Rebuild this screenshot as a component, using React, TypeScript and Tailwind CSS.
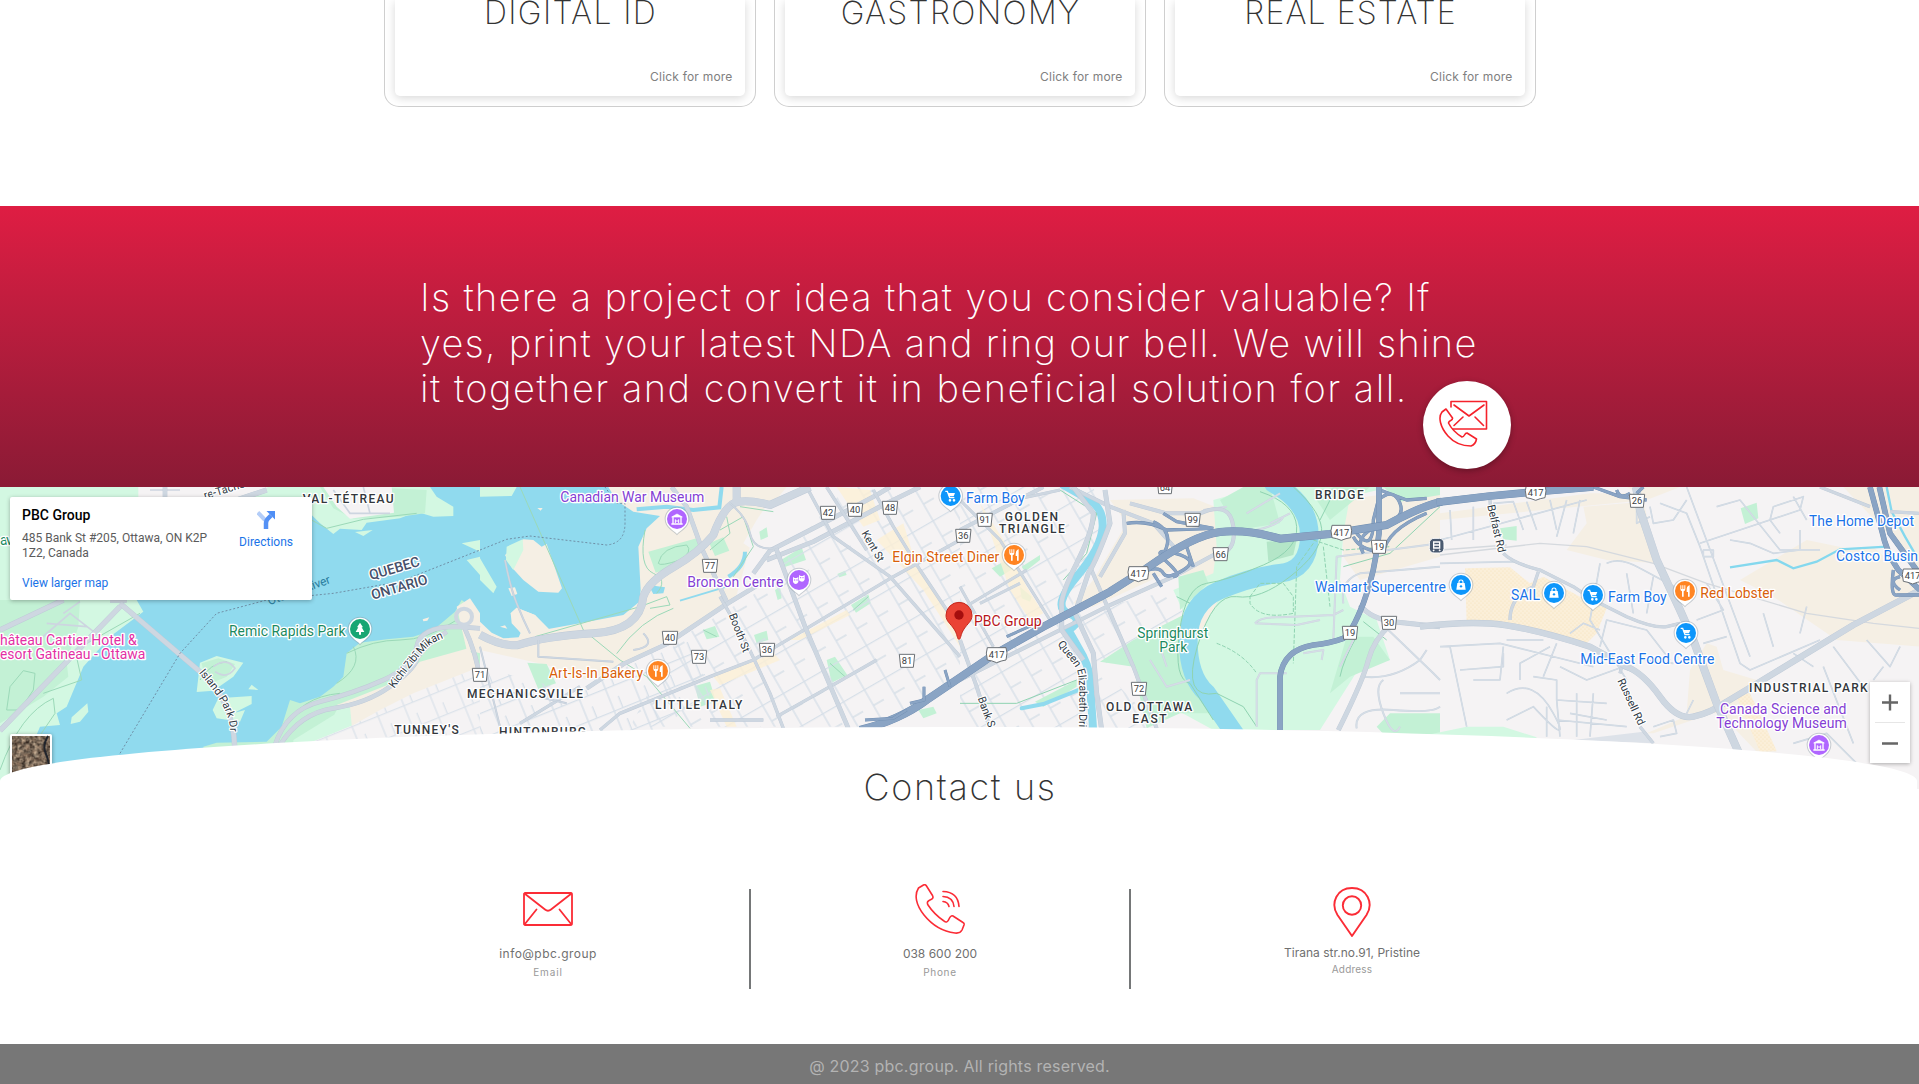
import React, { type ReactNode } from "react";

const LABEL = "Roboto, 'Liberation Sans', sans-serif";

/* ---------- map data (drawn at three units per pixel) ---------- */

type Place = { t: string; x: number; y: number; w: number; c: string };

const BLUE = "#1a73e8";
const ORANGE = "#d9600a";
const PURPLE = "#8440d4";
const GREEN = "#1c8a5f";
const MAGENTA = "#e32fa4";

const places: Place[] = [
  { t: "hâteau Cartier Hotel &", x: 0, y: 495, w: 410, c: MAGENTA },
  { t: "esort Gatineau - Ottawa", x: 0, y: 538, w: 436, c: MAGENTA },
  { t: "Remic Rapids Park", x: 687, y: 469, w: 350, c: GREEN },
  { t: "av", x: 0, y: 195, w: 38, c: GREEN },
  { t: "Canadian War Museum", x: 1681, y: 66, w: 432, c: PURPLE },
  { t: "Bronson Centre", x: 2062, y: 321, w: 288, c: PURPLE },
  { t: "Elgin Street Diner", x: 2677, y: 247, w: 321, c: ORANGE },
  { t: "Art-Is-In Bakery", x: 1647, y: 594, w: 282, c: ORANGE },
  { t: "Farm Boy", x: 2898, y: 69, w: 176, c: BLUE },
  { t: "PBC Group", x: 2922, y: 438, w: 203, c: "#b8151b" },
  { t: "Springhurst", x: 3412, y: 475, w: 213, c: GREEN },
  { t: "Park", x: 3478, y: 516, w: 84, c: GREEN },
  { t: "Walmart Supercentre", x: 3945, y: 337, w: 393, c: BLUE },
  { t: "SAIL", x: 4533, y: 360, w: 87, c: BLUE },
  { t: "Farm Boy", x: 4824, y: 367, w: 176, c: BLUE },
  { t: "Red Lobster", x: 5101, y: 354, w: 222, c: ORANGE },
  { t: "The Home Depot", x: 5427, y: 139, w: 315, c: BLUE },
  { t: "Costco Busin", x: 5508, y: 243, w: 246, c: BLUE },
  { t: "Mid-East Food Centre", x: 4741, y: 553, w: 402, c: BLUE },
  { t: "Canada Science and", x: 5160, y: 703, w: 379, c: PURPLE },
  { t: "Technology Museum", x: 5149, y: 745, w: 391, c: PURPLE },
];

const districts: Omit<Place, "c">[] = [
  { t: "VAL-TÉTREAU", x: 908, y: 70, w: 273 },
  { t: "TUNNEY'S", x: 1183, y: 763, w: 193 },
  { t: "MECHANICSVILLE", x: 1401, y: 655, w: 348 },
  { t: "LITTLE ITALY", x: 1965, y: 688, w: 262 },
  { t: "HINTONBURG", x: 1497, y: 768, w: 261 },
  { t: "GOLDEN", x: 3014, y: 124, w: 160 },
  { t: "TRIANGLE", x: 2997, y: 160, w: 197 },
  { t: "OLD OTTAWA", x: 3318, y: 694, w: 259 },
  { t: "EAST", x: 3397, y: 730, w: 103 },
  { t: "BRIDGE", x: 3945, y: 57, w: 146 },
  { t: "INDUSTRIAL PARK", x: 5247, y: 637, w: 356 },
];

const shields = [
  ["71", 1440, 585], ["77", 2130, 258], ["42", 2484, 99], ["40", 2565, 90], ["48", 2670, 84],
  ["40", 2010, 474], ["73", 2097, 531], ["36", 2301, 510], ["81", 2721, 543], ["36", 2890, 168],
  ["91", 2954, 120], ["64", 3495, 22], ["99", 3578, 120], ["66", 3662, 223], ["72", 3417, 627],
  ["19", 4137, 201], ["19", 4050, 459], ["30", 4167, 429], ["26", 4911, 63],
] as const;

const highwayShields = [
  [2990, 525], [3415, 282], [4024, 158], [4607, 38], [5738, 289],
];

const turnedLabels = [
  { t: "Kent St", x: 2584, y: 160, r: 60, w: 102 },
  { t: "Booth St", x: 2186, y: 405, r: 69, w: 122 },
  { t: "Bank S", x: 2933, y: 655, r: 70, w: 95 },
  { t: "Belfast Rd", x: 4462, y: 77, r: 77, w: 146 },
  { t: "Russell Rd", x: 4852, y: 602, r: 65, w: 150 },
];

const METAL = "#ced7e1";
const HWY = "#8aa4c4";
const HWY_EDGE = "#6e8cb0";

function Road({ d, w, c = METAL, edge = "#bfcad7" }: { d: string; w: number; c?: string; edge?: string }) {
  return (
    <>
      <path d={d} stroke={edge} strokeWidth={w + 2} />
      <path d={d} stroke={c} strokeWidth={w} />
    </>
  );
}

function Pin({ x, y, c, children }: { x: number; y: number; c: string; children: ReactNode }) {
  return (
    <g transform={`translate(${x} ${y})`}>
      <path d="M0 49C-10 37-37 27-37 0A37 37 0 0 1 37 0C37 27 10 37 0 49Z" fill="#8c98a4" opacity=".45" />
      <path d="M0 45C-10 33-34 25-34 0A34 34 0 0 1 34 0C34 25 10 33 0 45Z" fill="#fff" />
      <circle r="30" fill={c} />
      {children}
    </g>
  );
}

const Fork = () => (
  <path
    d="M-14-17v11q0 6 5 7v16h5V1q5-1 5-7v-11h-3v11h-3v-11h-3v11h-3v-11zM13-17q-8 3-8 13v7h4v14h5v-34z"
    fill="#fff"
  />
);
const Cart = () => (
  <g fill="none" stroke="#fff" strokeWidth="4">
    <path d="M-16-14h6L-3 5h14" />
    <path d="M-9-9h22L9 1H-5z" fill="#fff" stroke="none" />
    <circle cx="-2" cy="13" r="2" />
    <circle cx="10" cy="13" r="2" />
  </g>
);
const Bag = () => (
  <g>
    <path d="M-11-6h22l3 20h-28z" fill="#fff" />
    <path d="M-6-5v-5q0-5 6-5t6 5v5" fill="none" stroke="#fff" strokeWidth="3.5" />
    <circle cy="4" r="3.5" fill="#0d96fb" />
  </g>
);
const Museum = () => (
  <g fill="none" stroke="#fff" strokeWidth="4">
    <path d="M-16-6L0-15 16-6z" fill="#fff" strokeWidth="2" />
    <path d="M-12-6v20M12-6v20M-17 15h34" />
    <path d="M-5 12V1M5 12V1M-5 6H5" strokeWidth="3" />
  </g>
);
const Masks = () => (
  <g fill="#fff">
    <path d="M-18-9l5 3h6l5-3v15q-3 6-8 6t-8-6z" />
    <path d="M0-15l5 3h6l6-3V-1q-3 6-8 6-5 0-9-4z" />
    <g fill="#b066ff">
      <circle cx="-13" cy="0" r="2" />
      <circle cx="-6" cy="0" r="2" />
      <circle cx="5" cy="-7" r="2" />
      <circle cx="12" cy="-7" r="2" />
    </g>
  </g>
);
const Tree = () => <path d="M0-19L9-5H5l8 14H3v8h-6V9h-10L-5-5h-4z" fill="#fff" />;

function MapCanvas() {
  return (
    <svg viewBox="0 21 5757 906" className="block h-[302px] w-full" preserveAspectRatio="none">
      <defs>
        <pattern id="grid" width="72" height="112" patternUnits="userSpaceOnUse" patternTransform="rotate(-30)">
          <path d="M0 2H72M36 0V112M36 56H72" stroke="#d6dfe8" strokeWidth="4" fill="none" />
        </pattern>
        <pattern id="gridWest" width="84" height="72" patternUnits="userSpaceOnUse" patternTransform="rotate(-22)">
          <path d="M0 2H84M30 0V72M58 36V72" stroke="#d6dfe8" strokeWidth="4" fill="none" />
        </pattern>
        <pattern id="dots" width="12" height="12" patternUnits="userSpaceOnUse">
          <rect width="12" height="12" fill="#fbefd9" />
          <circle cx="3" cy="3" r="1.6" fill="#f5dfb2" />
          <circle cx="9" cy="9" r="1.6" fill="#f5dfb2" />
        </pattern>
        <path id="kichi" d="M1183 626C1215 580 1245 545 1270 515S1320 480 1345 468" />
        <path id="island" d="M596 578C640 630 690 690 690 752" />
        <path id="queen" d="M3172 492C3195 527 3228 552 3234 582S3238 680 3236 770" />
        <path id="tache" d="M615 58L780 8" />
      </defs>
      <rect y="21" width="5757" height="906" fill="#f5f3f4" />

      {/* west bank and river */}
      <rect y="21" width="1445" height="906" fill="#90daee" />
      <path
        d="M0 21H1290L1310 50 1360 80V108L1300 110 1250 95 1200 115 1100 128 1085 150 1020 146 1000 162 960 130 935 105 900 160V330L410 360 430 395 330 470 250 560 200 680 170 700 180 735 120 740 60 880 0 927Z"
        fill="#d3f8e2"
      />
      <path d="M0 360H240L235 440 200 545 205 590 130 650 0 730ZM960 21H1100L1280 30 1275 100 1200 110 1060 116 1000 85Z" fill="#c3f1d5" />
      <path d="M415 21H805L700 60H415ZM970 21H1175L1182 98 1050 116 1010 80Z" fill="#f5f3f4" />
      <path d="M430 355H940V300L700 360Z" fill="#90daee" />
      <g fill="#d3f8e2">
        <path d="M600 548L650 528 730 548 700 590 640 632 590 636ZM655 655L755 648V672L700 700 735 690 720 725 650 715 638 690ZM745 628L755 614 775 630ZM215 712L262 670 265 695 240 725 212 732ZM1065 156L1118 150 1090 168ZM1385 190L1440 180V215ZM1400 240L1440 230V285Z" />
      </g>
      <path d="M605 550L655 535 705 552 680 590 620 615Z" fill="#c3f1d5" />
      <path
        d="M610 800L650 788 800 785 845 740 870 660 900 670 960 650 1000 620 1030 590 1040 520 1080 488 1160 478 1240 470 1300 450 1365 395 1385 360 1440 400V927H610Z"
        fill="#c3f1d5"
      />
      <path d="M1010 675L1100 640 1200 600 1260 545 1405 505 1445 560V820H1060L1050 700Z" fill="#f5efe4" />
      <path d="M1010 690L1050 680 1060 790H960ZM880 780L1010 700 1020 800H880Z" fill="#d3f8e2" />
      <path d="M1140 690L1240 640 1440 560V800H900L1060 735Z" fill="#f5f3f4" />
      <path d="M1140 690L1240 640 1440 560V800H900L1060 735Z" fill="url(#gridWest)" opacity=".8" />
      <path d="M1370 380L1410 355 1440 400V520L1400 510Z" fill="#f5efe4" />
      <path d="M1268 418L1288 412 1282 422 1270 424Z" fill="#f5efe4" />
      <g fill="none" stroke="#9bd9b8" strokeWidth="3">
        <path d="M1040 520Q1120 480 1200 480T1370 420M1010 610Q1090 560 1060 500M850 750Q900 650 1020 640M20 690L30 620 70 572 105 580 100 630 60 690Z" />
        <path d="M0 870Q60 700 160 655L165 700 70 840M130 640L245 600 225 510 420 400M880 90L980 145 1090 118 1250 100M600 600Q630 550 680 545" />
      </g>
      <g fill="none" stroke="#cdd5e0" strokeWidth="5">
        <path d="M100 495L210 400 300 470M140 430L260 440M190 400L240 365M1000 30L1050 100H1170M1090 21L1110 100M450 30H540M640 560Q680 530 705 565 680 600 645 575" />
      </g>

      {/* centre: islands, bay and commercial land */}
      <g transform="translate(1440 0)">
        <path d="M0 400L0 927H300L470 700 650 600 760 380 830 130 920 21H380L0 21Z" fill="#f5efe4" />
        <path d="M0 510L200 555 320 600 430 560 560 480 740 370 850 300 850 230 790 190 830 120 870 60 1440 21V927H0Z" fill="#f5f3f4" />
        <path
          d="M0 21H385L410 62 460 95 540 108 500 145 475 200 482 330 478 365 430 405 300 430 205 447 165 405 110 383 92 400 95 430 122 458 116 472 70 475 35 458 0 425Z"
          fill="#90daee"
        />
        <path d="M130 178L160 180 185 200 200 192 246 325 235 338 175 335 130 300 95 262 75 225Z" fill="#f5efe4" />
        <path d="M92 400L110 383 165 405 207 447 170 460 125 462 100 430ZM85 325L105 322 112 342 95 348ZM172 84H188L182 92ZM60 440L75 436 82 446Z" fill="#f5efe4" />
        <path d="M80 200L128 178 130 210 100 270 78 240ZM0 21H110L95 48 0 50ZM0 235L50 320 40 340 0 300Z" fill="#d3f8e2" />
        <path d="M505 215L650 175 665 205 560 268 527 278ZM688 190L730 172 748 212 705 228ZM903 240L965 202 978 240 912 262ZM838 155L860 142 864 170 842 180ZM1113 375L1165 343 1172 370 1128 398ZM822 465L860 452 865 480 830 490ZM1040 540L1065 530 1102 585 1055 608ZM645 618L690 605 708 665 660 680ZM142 548L200 552 228 610 175 628ZM1315 690L1360 680 1370 700 1330 715ZM668 450L705 438 718 470 680 478ZM885 330L900 320 905 355 893 360ZM1072 282L1095 272 1100 285 1078 292Z" fill="#c3f1d5" />
        <path d="M0 560L300 640 440 560 620 460 700 640 480 780H0Z" fill="url(#gridWest)" />
        <path d="M590 480L860 320 1000 130 1100 21H1440V600L1180 740H450Z" fill="url(#grid)" />
        <path d="M1070 21L1170 30 1200 120 1150 140ZM1190 180L1270 130 1310 260 1440 440V500L1330 330ZM700 590L880 520 900 540 720 615ZM930 480L1100 390 1110 405 960 480ZM690 630L720 625 770 740H740Z" fill="#fdf0d6" opacity=".8" />
        <g fill="none" stroke="#90daee" strokeWidth="12">
          <path d="M725 21L718 82 640 90 560 80 470 88M795 215Q795 260 745 290" />
          <path strokeWidth="6" d="M600 362L740 320" />
        </g>
        <path d="M505 315L555 322 550 340 520 342Z" fill="#90daee" />
        <g fill="none" stroke="#9bd9b8" strokeWidth="3">
          <path d="M120 21L310 450 420 540 500 590 630 745M165 470L480 380 560 350 570 375 510 385M495 150Q475 260 520 280T530 340M535 250Q545 200 620 195 640 215 600 240 540 260 535 250M720 150L790 110 820 200 760 290M410 521Q480 420 580 385M740 110L750 160 690 210M780 80L880 95M670 450L710 470M1120 390L1165 350M1050 550L1095 590" />
        </g>
        <g fill="none" strokeLinejoin="round">
          <Road w={12} d="M320 625L430 552 560 492 740 372 850 305M820 280L870 212 1010 140 1190 45 1230 21M860 240L1000 185 1200 80 1320 21" />
          <Road w={8} d="M980 21L1060 170 1230 290 1440 530M1180 30L1240 140 1320 270 1440 450M120 730L300 620M360 750L420 700 690 590 820 540 980 445 1240 290 1440 180M720 350L800 490 870 640 910 745M690 720L850 720M890 710L1050 620 1190 540M1040 21L1160 210" />
          <Road w={12} d="M888 205L975 440 1105 745M575 21L620 80 665 205 740 365" />
          <Road w={22} d="M0 464Q60 497 110 496 200 468 340 460T490 350Q505 305 580 262T700 165Q735 70 775 65T870 75L990 21M770 21V70" />
          <Road w={4} d="M0 500L60 740M20 640H130L260 670M750 70Q800 110 810 160T880 205M175 480V530L400 545M490 460Q530 500 460 510M75 240Q90 320 110 370T150 460" />
        </g>
        <path d="M0 210L80 178 150 168 380 195Q435 190 435 130V70H410L375 21" fill="none" stroke="#6f8fa6" strokeWidth="3" strokeDasharray="6 6" />
      </g>

      {/* east of the centre */}
      <g transform="translate(2880 0)">
        <path d="M0 21H400L430 130 330 400 400 745H0ZM350 400L640 330 700 400 420 560 600 745H420L400 560Z" fill="url(#grid)" />
        <path d="M450 60L700 55 790 90 780 140 775 290 720 310 640 270 400 380 340 370 400 300 500 130ZM1145 60L1440 21V230L1200 300 1150 230Z" fill="#f5efe4" />
        <path
          d="M760 60L900 21H1290L1170 50 1150 160 1140 300 1170 380 1250 420 1290 540 1200 560 1080 750H760L650 690 640 590 690 440 640 330 760 280 770 200Z"
          fill="#d3f8e2"
        />
        <path d="M420 545L520 480 700 390 690 470 690 590 760 700 660 700 560 745 520 560ZM780 60L850 21H930L960 130 830 150ZM1070 60L1120 21H1230L1110 120ZM655 290L730 270 745 310 660 390ZM1270 21H1440V45L1320 65ZM95 265L180 220 195 245 120 290ZM185 260L240 225V240L195 275ZM225 665L350 600V620L250 680ZM1160 470L1240 470 1290 540 1170 590 1110 640ZM180 320L215 350 210 365 185 355ZM1250 740L1290 700H1440V762H1270ZM1335 21L1440 21V45Z" fill="#c3f1d5" />
        <path d="M920 185L1010 180 1000 225 925 245Z" fill="#b4e6c8" />
        <path d="M700 370L790 310 770 370 710 480Z" fill="#f5efe4" />
        <path d="M60 70L130 180 200 320 250 400 210 420 150 330Z" fill="#fdf0d6" opacity=".8" />
        <g fill="none" stroke="#90daee" strokeLinecap="round">
          <path strokeWidth="56" d="M940 10Q1050 70 1048 170T960 280T780 330T685 480T740 640L830 770" />
          <path strokeWidth="24" d="M310 15L380 55Q430 80 428 140T350 290T325 400 325 450L370 530Q395 580 392 640L400 760" />
          <path strokeWidth="12" d="M185 685L250 672 360 628" />
        </g>
        <g fill="none" stroke="#8fd3b1" strokeWidth="3">
          <path d="M900 35Q1005 70 1010 140T910 255T740 310T658 460 690 610L760 720M1000 21Q1090 100 1085 160T990 290T830 350T712 500T770 640L850 680 890 740M0 670H170L350 600M300 30L410 100 380 220 310 300M1080 120L1110 60M1150 260L1290 220 1440 80" />
          <path strokeDasharray="12 5" d="M870 350L900 310 970 310 1000 350V400Q900 420 870 370ZM770 490Q850 520 890 580M1060 180L1150 210 1290 200M1090 200L1110 380M1060 190L1010 260 1000 550" />
          <path d="M650 350L690 370M1210 425L1280 480M1190 470Q1150 540 1140 590" />
        </g>
        <g fill="none" strokeLinejoin="round">
          <Road w={4} c="#d5dde6" edge="#cbd4de" d="M885 430Q900 410 960 412L1120 405 1150 390M885 430L1010 435 1080 420M890 740V600L900 580H980M1270 600Q1240 620 1270 700T1320 740M1320 640H1440M1190 745Q1180 680 1300 690T1440 680M1285 450L1420 580 1440 600M1210 590Q1300 600 1380 540L1400 510M570 540L620 620 690 600M600 500L620 560M1140 560L1180 480M1030 520L1090 510 1085 540M730 90L800 80M930 130L990 100M1150 370Q1140 300 1200 280L1440 260M1120 480L1130 230 1440 190M860 100L960 40M840 160Q960 140 970 110" />
          <Road w={10} d="M490 90L495 160 420 290M330 21L450 80 580 130 650 210M510 70L620 100 720 100Q810 60 820 140T770 220L640 290 440 380 160 520 0 600M390 260L520 560 590 745M0 480L50 620 90 745M0 150L250 21" />
          <Road w={13} d="M340 21L400 100Q400 150 350 250T305 380V450L370 540M435 30L450 130Q410 240 385 280L345 400 400 520 410 640 425 750" />
          <Road w={7} d="M0 60L120 180 270 420M0 390L100 330 200 270M160 60L300 30M0 320L100 500M60 370L180 310" />
          <Road w={13} d="M1200 375Q1230 415 1300 425L1440 440M1295 430Q1240 480 1225 540T1135 750" />
          <Road c={HWY} edge={HWY_EDGE} w={8} d="M500 130Q560 120 620 150L760 145M610 100L650 125 760 145M580 125Q635 150 620 200T560 262M565 270Q600 260 610 280T670 270T645 220 620 245 640 290M580 280L605 320M680 200L700 260M1190 160Q1240 220 1240 120L1260 40M1180 170Q1200 210 1260 215M1255 60Q1300 20 1320 70T1250 140Q1180 170 1210 220M1270 220Q1280 150 1400 100M1260 30L1340 60 1400 55" />
          <Road c={HWY} edge={HWY_EDGE} w={15} d="M1257 21V160Q1245 280 1210 370T1150 475Q1110 490 1060 495 970 510 960 590V750" />
          <Road c={HWY} edge={HWY_EDGE} w={22} d="M-300 750Q-180 720 -100 660L100 525 250 440 450 335 560 265Q700 165 780 156T960 176L1110 162 1280 135Q1380 80 1445 65" />
          <Road c={HWY} edge={HWY_EDGE} w={7} d="M-285 720L-200 715 -160 690M-108 620V660L-150 670M-45 570L-30 620M140 470L240 425" />
        </g>
      </g>

      {/* east end */}
      <g transform="translate(4320 0)">
        <path d="M430 80L610 65 655 250 500 240 380 210 440 130ZM900 300L1000 240 1100 180 1220 205 1300 200 1440 330V500L1190 480 1000 350ZM750 570L800 490 830 500 850 570 950 600 905 690 1010 815H950L840 700 740 700ZM0 100L450 40H600L560 21H720L620 60 0 120ZM1210 21H1440V310L1390 210ZM620 760L760 700 820 700 640 760Z" fill="#f5efe4" />
        <path d="M75 265L210 262 270 310 310 290 420 350 500 385 470 460 440 490 200 430H80ZM890 650L930 640 1010 812 960 815Z" fill="url(#dots)" />
        <path d="M180 145L230 138V182L190 178ZM902 85L950 68 955 115 915 132Z" fill="#c3f1d5" />
        <path d="M-40 765L80 740 190 740 290 772 280 790H-40Z" fill="#d3f8e2" />
        <path d="M400 780L610 755 640 790Z" fill="#dde2e9" />
        <path d="M870 262L1010 240 1060 265 1130 245 1200 208 1340 200M1340 21L1355 95 1395 170 1430 230" fill="none" stroke="#84d8ee" strokeWidth="7" />
        <g fill="none" strokeLinejoin="round">
          <Road w={3} c="#d5dde6" edge="#ccd6e0" d="M30 90L35 180M100 80V180M160 70L220 65 250 150M260 65L290 150M330 60L350 150M380 60L350 170M420 60L400 160M0 180L440 60M0 250L220 245 290 270M480 250L450 420 560 600M500 250Q540 230 600 265L740 340M560 280L580 400M640 290L620 400M660 70L740 100 780 200 900 550 930 570 1140 480M740 21L900 450 930 530M780 190L1080 90 1090 50 1000 80 990 120 1020 160M870 180L930 190 1000 220 1080 210V150M830 80L900 60 1020 210 1140 210M1060 50L1100 120M790 210H820V230H790ZM800 310L850 390 770 420M790 490L860 470M970 400L1000 500M1100 380L1080 460M1060 520L1120 560M1180 500L1270 620M1280 480L1350 560 1380 500M1330 560L1300 600M1150 560L1240 790M630 80L640 130 700 120 740 60M590 70V130L630 110M0 500L180 490 380 540 460 560M30 500L80 740M100 600H180L190 500M60 570L190 560V520M240 600V550L330 500M280 590L350 600V660L500 670M200 640Q280 590 340 700T280 680L200 720M320 680V770M350 660L360 770M410 640V770M460 640L450 770M350 720L560 740M390 700L500 720M550 560L440 600 360 560M310 480H200M350 490L310 590M480 500L500 420 620 450 690 540M700 550L610 540M390 460L430 430 480 450M640 740L700 720 710 760 660 770M1060 790L1160 760 1250 850M740 700L760 660" />
          <path d="M0 225L300 190 440 200 640 250 800 310 1100 400 1300 430 1437 445M0 210L200 195" stroke="#d5d9de" strokeWidth="4" />
          <Road w={8} d="M150 60L155 130M190 220Q220 250 300 270L400 320 460 360 560 410Q640 445 680 440L720 430M295 275L280 320Q210 350 210 420M540 580L545 560 600 580M600 740L640 790M1140 21L1290 80M1350 95L1437 100" />
          <Road w={17} d="M-60 440Q100 420 200 436T450 500L560 560Q610 580 660 650T760 710 860 665L960 605Q1100 520 1240 435L1440 330" />
          <Road w={22} d="M588 21L600 90 650 240 720 390 760 480 830 670 895 815" />
          <Road c={HWY} edge={HWY_EDGE} w={8} d="M460 21L540 50 620 60M530 30Q540 60 570 40M1360 270Q1350 350 1370 345L1437 345M1380 330Q1340 300 1380 290M590 40L610 21" />
          <Road c={HWY} edge={HWY_EDGE} w={15} d="M1290 21L1325 150Q1340 220 1375 270L1440 330M1318 21L1350 160 1437 280" />
          <Road c={HWY} edge={HWY_EDGE} w={21} d="M-10 67L150 48 290 35 460 21" />
        </g>
      </g>

      {/* western roads */}
      <g fill="none" strokeLinejoin="round">
        <Road w={14} d="M360 370L600 575Q700 660 704 800M0 752L360 380M0 450L190 360M330 360L380 360M620 90L800 30" />
        <Road w={12} d="M825 795Q860 690 960 665T1150 600 1250 500 1370 440L1440 445M840 795Q900 700 1000 685T1170 620 1250 540 1340 455M1392 440Q1430 520 1440 600M495 21V60" />
        <circle cx="1392" cy="410" r="24" stroke={METAL} strokeWidth="12" />
      </g>
      <path d="M360 820L480 620 540 520 650 400 800 360 1000 340 1200 305 1440 210" fill="none" stroke="#6f8fa6" strokeWidth="3" strokeDasharray="6 6" />

      {/* lettering */}
      <g fontFamily={LABEL} stroke="#fff" strokeLinejoin="round" paintOrder="stroke">
        <g fontSize="33" fill="#2f3a45" strokeWidth="7">
          <text textLength="215"><textPath href="#kichi">Kichi Zībī Mīkan</textPath></text>
          <text textLength="205"><textPath href="#island">Island Park Dr</textPath></text>
          <text textLength="270"><textPath href="#queen">Queen Elizabeth Dri</textPath></text>
          <text><textPath href="#tache">re-Taché Bd</textPath></text>
          {turnedLabels.map((l) => (
            <text key={l.t} transform={`translate(${l.x} ${l.y}) rotate(${l.r})`} textLength={l.w} lengthAdjust="spacingAndGlyphs">
              {l.t}
            </text>
          ))}
        </g>
        <g fontSize="42" fill="#47506a" strokeWidth="8" fontWeight="500">
          <text transform="translate(1112 300) rotate(-16)" textLength="156">QUEBEC</text>
          <text transform="translate(1118 359) rotate(-16)" textLength="174">ONTARIO</text>
        </g>
        <g fontSize="36" fill="#2c7fa0" stroke="#90daee">
          <text transform="translate(808 376) rotate(-20)" textLength="197">Ottawa River</text>
        </g>
        <g fontSize="36" fontWeight="500" fill="#33373c" strokeWidth="8">
          {districts.map((d) => (
            <text key={d.t} x={d.x} y={d.y} textLength={d.w}>{d.t}</text>
          ))}
        </g>
        <g fontSize="42" strokeWidth="8">
          {places.map((p) => (
            <text key={p.t + p.x} x={p.x} y={p.y} fill={p.c} textLength={p.w}>{p.t}</text>
          ))}
        </g>
      </g>

      {/* route shields */}
      <g fontFamily={LABEL} fontSize="28" fill="#3c4043" textAnchor="middle">
        {shields.map(([n, x, y]) => (
          <g key={n + x} transform={`translate(${x} ${y})`}>
            <path d="M-23-20H23L19 19H-19Z" fill="#fff" stroke="#6b7075" strokeWidth="3" strokeLinejoin="round" />
            <text y="10">{n}</text>
          </g>
        ))}
        {highwayShields.map(([x, y]) => (
          <g key={x} transform={`translate(${x} ${y})`}>
            <path d="M-28-22H28Q34-8 28 15 14 17 0 23-14 17-28 15-34-8-28-22Z" fill="#fff" stroke="#6b7075" strokeWidth="3" />
            <text y="9">417</text>
          </g>
        ))}
      </g>

      {/* points of interest */}
      <Pin x={1080} y={447} c="#17a673"><Tree /></Pin>
      <Pin x={2031} y={117} c="#b066ff"><Museum /></Pin>
      <Pin x={2397} y={300} c="#b066ff"><Masks /></Pin>
      <Pin x={1974} y={573} c="#ff8422"><Fork /></Pin>
      <Pin x={2852} y={48} c="#0d96fb"><Cart /></Pin>
      <Pin x={3042} y={225} c="#ff8422"><Fork /></Pin>
      <Pin x={4383} y={315} c="#0d96fb"><Bag /></Pin>
      <Pin x={4662} y={339} c="#0d96fb"><Bag /></Pin>
      <Pin x={4779} y={345} c="#0d96fb"><Cart /></Pin>
      <Pin x={5055} y={333} c="#ff8422"><Fork /></Pin>
      <Pin x={5058} y={459} c="#0d96fb"><Cart /></Pin>
      <Pin x={5457} y={795} c="#b066ff"><Museum /></Pin>
      <g transform="translate(4310 197)">
        <rect x="-22" y="-22" width="44" height="44" rx="14" fill="#4a5a70" stroke="#fff" strokeWidth="3" />
        <path d="M-9-11h18v18h-18zM-7 12l-4 4M7 12l4 4M-9-2H9" fill="none" stroke="#fff" strokeWidth="4" />
      </g>
      <path d="M2877 478C2871 478 2873 463 2862 447 2851 430 2838 424 2838 406A39 39 0 0 1 2916 406C2916 424 2903 430 2892 447 2881 463 2883 478 2877 478Z" fill="#ea4335" stroke="#c5281c" strokeWidth="3" />
      <circle cx="2877" cy="405" r="14" fill="#a50e0e" />
    </svg>
  );
}

/* ---------- line icons ---------- */

const RED = "#fb2c36";

function CallMailIcon() {
  return (
    <svg viewBox="0 0 49 47" className="h-[47px] w-[49px]" fill="none" stroke="#f5222b" strokeWidth="1.6" strokeLinejoin="round" strokeLinecap="round">
      <path d="M12 7V1.5H47.500V29H14M15 5L30 16 45 5M24 17L15 25.500M36 17L44.500 25.500" />
      <path d="M7 9L3 12C-1 17 1 27 9 36S25 46 32 46C35 45 37 42 37.500 39L28 33C25 33 26 37 23 37C18 34 12 28 9.500 23C10 20 14 21 13.500 18Z" />
    </svg>
  );
}

function MailIcon() {
  return (
    <svg viewBox="0 0 50 34" className="h-[34px] w-[50px]" fill="none" stroke={RED} strokeWidth="1.8" strokeLinejoin="round" strokeLinecap="round">
      <rect x="1" y="1" width="48" height="32" rx="1.5" />
      <path d="M1.500 1.500L22 17.500Q25 20 28 17.500L48.500 1.500M13.500 17.500L1.500 32.500M36.500 17.500L48.500 32.500" />
    </svg>
  );
}

function PhoneIcon() {
  return (
    <svg viewBox="0 0 50 50" className="h-[50px] w-[50px]" fill="none" stroke={RED} strokeWidth="1.6" strokeLinejoin="round" strokeLinecap="round">
      <path d="M8.500 1L3.500 4C-1 11 1 21 9 31S28 47.500 40 49C44 49.500 46 48 47 46L49 41C49.500 39.500 49 39 48 38.500L38 32C36 31 35 33 34 35C33 38 31 39 29 37C23 33 17 27 13 21C11.500 18 13 17 15 16C18 15 18.500 13.500 17.500 11.500L11.500 2C10.700.7 9.700.4 8.500 1Z" />
      <path d="M28 7.500Q43 8 44 22.500M28 12.500Q38 13 39 22.500M28 17.500Q33 18 34 22.500" />
    </svg>
  );
}

function AddressIcon() {
  return (
    <svg viewBox="0 0 38 50" className="h-[50px] w-[38px]" fill="none" stroke={RED} strokeWidth="1.9" strokeLinejoin="round">
      <path d="M19 49L4.500 28C-3 16 4 1 19 1S41 16 33.500 28Z" />
      <circle cx="19" cy="18.5" r="9.2" />
    </svg>
  );
}

function DirectionsIcon() {
  return (
    <svg viewBox="0 0 18 18" className="size-[18px]" fill="none">
      <path d="M.8 1.500L8 9" stroke="#b3cdf8" strokeWidth="4" />
      <path d="M9 18V12Q9 9.500 11 7.500L14 4.500" stroke="#5491f5" strokeWidth="4.5" />
      <path d="M9.500 0H18V8.500Z" fill="#4f8ef5" />
    </svg>
  );
}

/* ---------- page sections ---------- */

function ServiceCard({ title, spacing }: { title: string; spacing: string }) {
  return (
    <article className="flex h-[107px] w-[372px] rounded-b-[15px] border border-t-0 border-[#cfcfcf] px-[10px] pb-[10px]">
      <div className="flex flex-1 flex-col justify-between rounded-b-[5px] bg-white px-[12px] pb-[7px] shadow-[0_2px_10px_rgba(0,0,0,0.16)]">
        <h3 className={`-mt-[7px] pl-[2px] text-center text-[32px] leading-[40px] font-extralight text-[#333] ${spacing}`}>{title}</h3>
        <a className="text-right text-[12px] leading-[24px] tracking-[0.2px] text-[#808080]">Click for more</a>
      </div>
    </article>
  );
}

type ContactProps = {
  icon: ReactNode;
  value: string;
  label: string;
  shift?: string;
  valueClass: string;
  labelClass: string;
};

function Contact({ icon, value, label, shift = "", valueClass, labelClass }: ContactProps) {
  return (
    <div className={`flex flex-col items-center ${shift}`}>
      <div className="flex h-[50px] items-center">{icon}</div>
      <p className={`text-[12px] leading-4 text-[#707070] ${valueClass}`}>{value}</p>
      <p className={`text-[10px] leading-3 text-[#999] ${labelClass}`}>{label}</p>
    </div>
  );
}

export default function App() {
  return (
    <div className="relative flex h-[1084px] w-full flex-col overflow-hidden bg-white font-['Inter','Liberation_Sans',sans-serif]">
      <section className="flex h-[206px] shrink-0 items-start justify-center gap-[18px]">
        <ServiceCard title="DIGITAL ID" spacing="tracking-[1.35px]" />
        <ServiceCard title="GASTRONOMY" spacing="tracking-[1.35px]" />
        <ServiceCard title="REAL ESTATE" spacing="tracking-[1.1px]" />
      </section>

      <section className="relative h-[281px] shrink-0 bg-linear-to-b from-[#df1d43] to-[#8a1a35] pt-[69px] pl-[420px]">
        <p className="text-[38px] leading-[45.5px] font-extralight whitespace-nowrap text-white">
          <span className="block tracking-[1.31px]">Is there a project or idea that you consider valuable? If</span>
          <span className="block tracking-[1.28px]">yes, print your latest NDA and ring our bell. We will shine</span>
          <span className="block tracking-[1.48px]">it together and convert it in beneficial solution for all.</span>
        </p>
        <button className="absolute top-[175px] left-[1423px] flex size-[88px] items-center justify-center rounded-full bg-white pr-[8px] pb-[4px] shadow-[0_2px_6px_rgba(0,0,0,0.3)]">
          <CallMailIcon />
        </button>
      </section>

      <section className="relative h-[302px] shrink-0 overflow-hidden font-['Roboto','Liberation_Sans',sans-serif]">
        <MapCanvas />
        <div className="absolute top-[10px] left-[10px] flex h-[103px] w-[302px] justify-between rounded-[2px] bg-white pt-[9px] pr-[19px] pl-[12px] shadow-[0_1px_4px_rgba(0,0,0,0.3)]">
          <div className="w-[200px]">
            <h4 className="text-[14px] leading-[18px] font-medium text-black">PBC Group</h4>
            <p className="mt-[7px] text-[12px] leading-[15px] text-[#5b5b5b]">485 Bank St #205, Ottawa, ON K2P 1Z2, Canada</p>
            <a className="mt-[15px] block text-[12px] leading-[15px] text-[#1a73e8]">View larger map</a>
          </div>
          <div className="flex flex-col items-center pt-[5px]">
            <DirectionsIcon />
            <span className="mt-[6px] text-[12px] leading-[15px] text-[#1a73e8]">Directions</span>
          </div>
        </div>
        <svg viewBox="0 0 42 46" className="absolute top-[247px] left-[10px] h-[46px] w-[42px] rounded-[2px] shadow-[0_1px_4px_rgba(0,0,0,0.4)]">
          <filter id="ground" x="0" y="0" width="1" height="1" colorInterpolationFilters="sRGB">
            <feTurbulence type="fractalNoise" baseFrequency=".25" numOctaves="4" seed="4" />
            <feColorMatrix values=".7 .5 0 0 -.12 .6 .5 0 0 -.14 .5 .45 0 0 -.13 0 0 0 0 1" />
          </filter>
          <rect width="42" height="46" fill="#fff" />
          <rect x="2" y="2" width="38" height="44" filter="url(#ground)" />
          <path d="M38 2Q32 12 36 20T38 40" stroke="#20242c" strokeWidth="2" fill="none" />
        </svg>
        <div className="absolute top-[195px] right-[9px] h-[81px] w-[40px] bg-white shadow-[0_1px_4px_rgba(0,0,0,0.3)]">
          <svg viewBox="0 0 40 81" className="h-[81px] w-[40px]" stroke="#666" strokeWidth="2.4">
            <path d="M12 20.500H28M20 12.500V28.500M12 61.500H28" />
            <path d="M5 40.500H35" stroke="#e6e6e6" strokeWidth="1" />
          </svg>
        </div>
      </section>

      <section className="relative -mt-[62px] flex h-[317px] w-[1917px] shrink-0 flex-col items-center rounded-[50%_50%_0_0/54px_54px_0_0] bg-white">
        <h2 className="mt-[37px] pl-[3px] text-[36px] leading-[46px] font-extralight tracking-[1.65px] text-[#333]">Contact us</h2>
        <div className="mt-[74px] grid w-[1160px] grid-cols-[370px_2px_378px_2px_408px]">
          <Contact
            icon={<MailIcon />}
            value="info@pbc.group"
            label="Email"
            shift="pr-[31px]"
            valueClass="mt-[12px] tracking-[0.45px]"
            labelClass="mt-[4px] tracking-[0.9px]"
          />
          <div className="mt-[5px] h-[100px] bg-[#757778]" />
          <Contact
            icon={<PhoneIcon />}
            value="038 600 200"
            label="Phone"
            shift="pl-px"
            valueClass="mt-[12px]"
            labelClass="mt-[4px] tracking-[0.7px]"
          />
          <div className="mt-[5px] h-[100px] bg-[#757778]" />
          <Contact
            icon={<AddressIcon />}
            value="Tirana str.no.91, Pristine"
            label="Address"
            shift="pl-[35px] pt-[3px]"
            valueClass="mt-[8px]"
            labelClass="mt-[2px] tracking-[0.2px]"
          />
        </div>
      </section>

      <footer className="relative flex h-[40px] shrink-0 items-center justify-center bg-[#777] pt-[4px] text-[16px] tracking-[0.2px] text-[#b3b3b3]">
        @ 2023 pbc.group. All rights reserved.
      </footer>
    </div>
  );
}
